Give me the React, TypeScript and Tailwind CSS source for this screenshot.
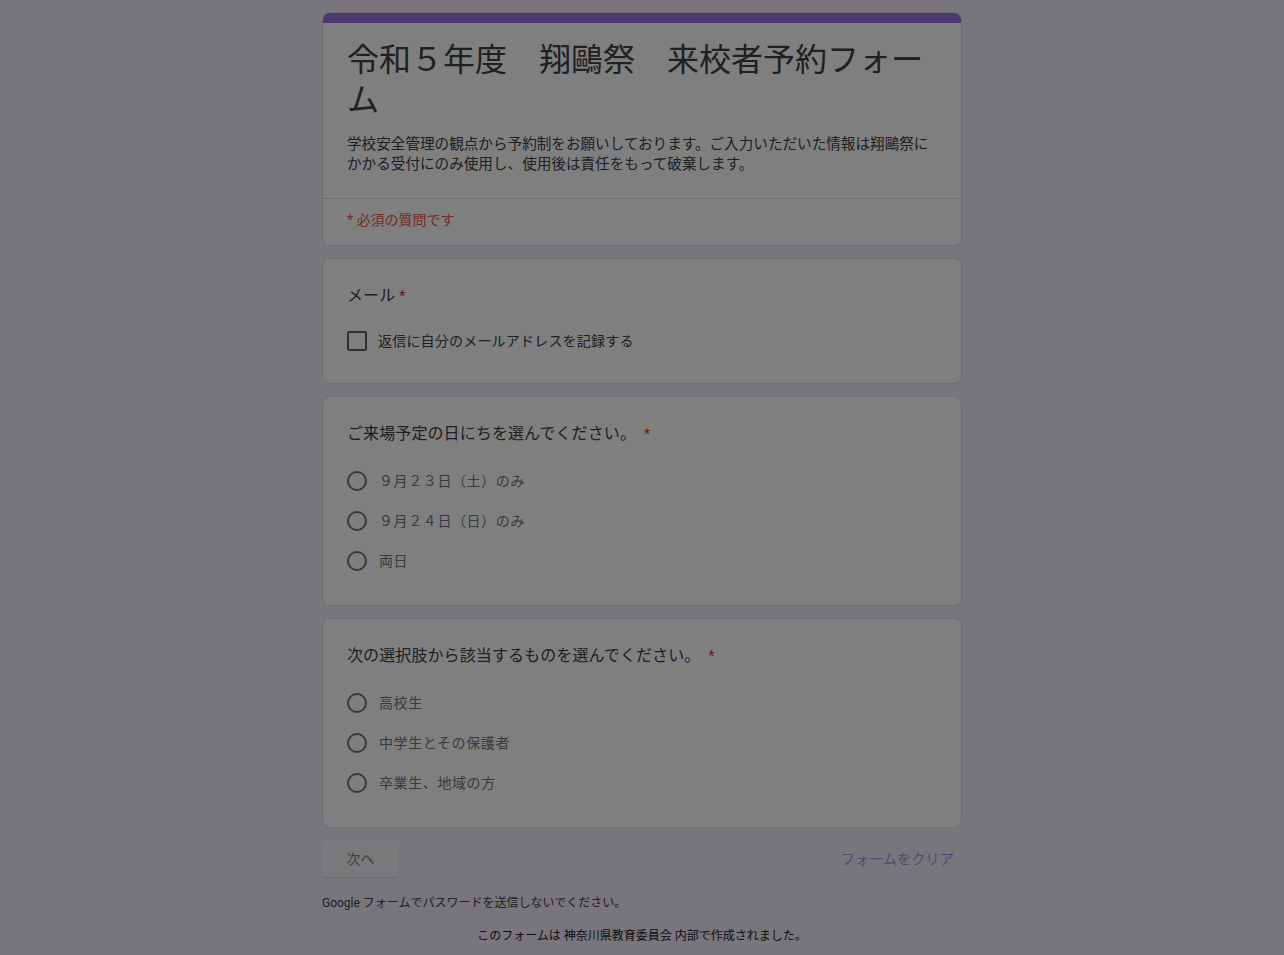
import React from "react";

const font = { fontFamily: 'Roboto, "Noto Sans CJK JP", "Noto Sans", sans-serif' };

function Radio({ label }: { label: string }) {
  return (
    <div className="flex h-10 items-center">
      <div className="h-5 w-5 rounded-full border-2 border-[#6f7378]" />
      <span className="ml-[12px] text-[14px] text-[#70757a] tracking-[0.6px]">{label}</span>
    </div>
  );
}

function Question({ title, options }: { title: string; options: string[] }) {
  return (
    <div className="rounded-lg border border-[#dadce0] bg-white px-6 pb-6 pt-[25px]">
      <div className="text-[16px] leading-6 text-[#3c4043] tracking-[0.1px]">
        {title}
        <span className="ml-1 align-top text-[#d93025] text-[14px]">*</span>
      </div>
      <div className="mt-[15px] flex flex-col">
        {options.map((o) => (
          <Radio key={o} label={o} />
        ))}
      </div>
    </div>
  );
}

export default function App() {
  return (
    <div className="relative min-h-[955px] bg-[#f0ebf8]" style={font}>
      <div className="mx-auto flex w-[640px] flex-col pt-3">
        {/* Header card */}
        <div className="overflow-hidden rounded-lg border border-[#dadce0] bg-white">
          <div className="h-[10px] bg-[#9870e0]" />
          <div className="px-6 pb-6 pt-[17px]">
            <h1 className="text-[32px] leading-[40px] text-[#3c4043]">
              令和５年度　翔鷗祭　来校者予約フォーム
            </h1>
            <p className="mt-[14px] text-[14.6px] leading-5 text-[#3c4043]">
              学校安全管理の観点から予約制をお願いしております。ご入力いただいた情報は翔鷗祭にかかる受付にのみ使用し、使用後は責任をもって破棄します。
            </p>
          </div>
          <div className="border-t border-[#dadce0] px-6 pb-[15px] pt-[11px] text-[14px] leading-5 text-[#e0584e]">
            * 必須の質問です
          </div>
        </div>

        <div className="mt-[12px] flex flex-col gap-[12px]">
          {/* Mail */}
          <div className="rounded-lg border border-[#dadce0] bg-white px-6 pb-6 pt-[25px]">
            <div className="text-[16px] leading-6 text-[#3c4043] tracking-[0.1px]">
              メール
              <span className="ml-1 align-top text-[#d93025] text-[14px]">*</span>
            </div>
            <div className="mt-[15px] flex h-9 items-center">
              <div className="h-5 w-5 rounded-[2px] border-2 border-[#5f6368]" />
              <span className="ml-[11px] text-[14px] text-[#3c4043] tracking-[0.2px]">
                返信に自分のメールアドレスを記録する
              </span>
            </div>
          </div>

          <Question
            title="ご来場予定の日にちを選んでください。 "
            options={["９月２３日（土）のみ", "９月２４日（日）のみ", "両日"]}
          />
          <Question
            title="次の選択肢から該当するものを選んでください。 "
            options={["高校生", "中学生とその保護者", "卒業生、地域の方"]}
          />
        </div>

        <div className="mt-[13px] flex items-center justify-between">
          <div className="flex h-9 w-[77px] items-center justify-center rounded bg-[#f4f1f7] text-[14px] text-[#7e7a84] shadow-[0_1px_2px_rgba(0,0,0,0.1)]">
            次へ
          </div>
          <div className="pr-2 text-[14px] text-[#a292e0] tracking-[0.2px]">フォームをクリア</div>
        </div>

        <div className="mt-[18px] text-[12px] leading-4 text-[#3c4043]">
          Google フォームでパスワードを送信しないでください。
        </div>
        <div className="mt-[17px] text-center text-[12px] leading-4 text-[#202124]">
          このフォームは 神奈川県教育委員会 内部で作成されました。
        </div>
      </div>
      <div className="absolute inset-0 bg-black/50" />
    </div>
  );
}
